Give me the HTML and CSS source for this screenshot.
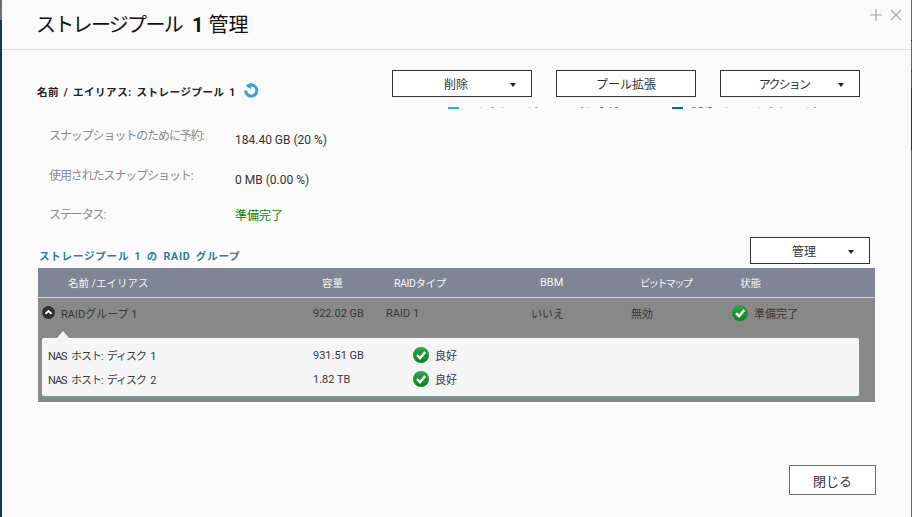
FILE: index.html
```html
<!DOCTYPE html>
<html lang="ja">
<head>
<meta charset="utf-8">
<title>ストレージプール 1 管理</title>
<link rel="stylesheet" href="styles.css">
</head>
<body>
<div class="dialog">
  <header class="head">
    <h1 class="title"><span class="kana">ストレージプール</span> <b class="num">1</b> 管理</h1>
    <div class="winbtns">
      <svg class="winicon" viewBox="0 0 12 12"><path d="M6 0V12M0 6H12"/></svg>
      <svg class="winicon" viewBox="0 0 12 12"><path d="M1 1L11 11M11 1L1 11"/></svg>
    </div>
  </header>
  <section class="top">
    <div class="alias">
      <span class="alias-text">名前 / エイリアス: ストレージプール 1</span>
      <svg class="refresh" viewBox="0 0 16 16"><path d="M4.2 4.6A5.6 5.6 0 1 1 2.6 8.6" /><polygon points="8.2,0.4 8.2,7 3,3.8"/></svg>
    </div>
    <div class="actions">
      <button class="btn has-caret"><span>削除</span><i class="caret"></i></button>
      <button class="btn"><span>プール拡張</span></button>
      <button class="btn has-caret"><span class="narrow">アクション</span><i class="caret"></i></button>
    </div>
  </section>
  <div class="clip-legend">
    <span class="swatch light"></span><span class="lg">スナップショットのために予約: 184.40 GB</span>
    <span class="swatch dark"></span><span class="lg">使用されたスナップショット: 0 MB</span>
  </div>
  <dl class="info">
    <dt>スナップショットのために予約:</dt><dd>184.40 GB (20 %)</dd>
    <dt>使用されたスナップショット:</dt><dd>0 MB (0.00 %)</dd>
    <dt>ステータス:</dt><dd class="ok">準備完了</dd>
  </dl>
  <div class="group-head">
    <h2 class="group-title">ストレージプール 1 の RAID グループ</h2>
    <button class="btn has-caret manage"><span>管理</span><i class="caret"></i></button>
  </div>
  <div class="table">
    <div class="row thead">
      <span class="c-name">名前 /エイリアス</span>
      <span class="c-cap">容量</span>
      <span class="c-type">RAIDタイプ</span>
      <span class="c-bbm">BBM</span>
      <span class="c-map">ビットマップ</span>
      <span class="c-state">状態</span>
    </div>
    <div class="row group">
      <span class="c-name with-toggle">
        <svg class="toggle" viewBox="0 0 12 12"><circle cx="6" cy="6" r="6"/><path d="M3.2 7.2L6 4.6L8.8 7.2"/></svg>
        RAIDグループ 1
      </span>
      <span class="c-cap">922.02 GB</span>
      <span class="c-type">RAID 1</span>
      <span class="c-bbm">いいえ</span>
      <span class="c-map">無効</span>
      <span class="c-state status"><svg class="check" viewBox="0 0 16 16"><defs><linearGradient id="chk" x1="0" y1="0" x2="0" y2="1"><stop offset="0" stop-color="#2fa845"/><stop offset="1" stop-color="#0d7f26"/></linearGradient></defs><circle cx="8" cy="8" r="8" fill="url(#chk)"/><path d="M4 8.2L7 11.2L12.2 5"/></svg>準備完了</span>
    </div>
    <div class="disks">
      <div class="row disk">
        <span class="c-name">NAS ホスト: ディスク 1</span>
        <span class="c-cap">931.51 GB</span>
        <span class="status"><svg class="check" viewBox="0 0 16 16"><circle cx="8" cy="8" r="8" fill="url(#chk)"/><path d="M4 8.2L7 11.2L12.2 5"/></svg>良好</span>
      </div>
      <div class="row disk">
        <span class="c-name">NAS ホスト: ディスク 2</span>
        <span class="c-cap">1.82 TB</span>
        <span class="status"><svg class="check" viewBox="0 0 16 16"><circle cx="8" cy="8" r="8" fill="url(#chk)"/><path d="M4 8.2L7 11.2L12.2 5"/></svg>良好</span>
      </div>
    </div>
  </div>
  <footer class="foot"><button class="btn close">閉じる</button></footer>
</div>
</body>
</html>
```
FILE: styles.css
```css
* { box-sizing: border-box; }
html, body { margin: 0; height: 100%; overflow: hidden; }
body {
  background:
    linear-gradient(#666, #777) left top / 2px 20px no-repeat,
    linear-gradient(#666 0 40px, #222 40px 41px, #666 41px 70px, #222 70px 71px, #555 71px 88px, #1d3a42 88px 150px, #666 150px) right top / 1px 100% no-repeat,
    #0f3558;
  font-family: Roboto, "Noto Sans CJK JP", "Liberation Sans", sans-serif;
  font-size: 11px;
  color: #333;
  padding-left: 2px;
  padding-right: 1px;
}
.dialog { height: 517px; background: #fafafa; overflow: hidden; }
.head {
  height: 50px;
  border-bottom: 1px solid #e0e0e0;
  display: flex;
  justify-content: space-between;
  padding-left: 34px;
}
.title { margin: 8px 0 0; font-size: 20px; font-weight: 400; line-height: 34px; color: #111; white-space: nowrap; }
.kana { letter-spacing: -1.7px; }
.num { font-weight: 700; margin: 0 0 0 5px; }
.winbtns { display: flex; gap: 8px; padding: 9px 9px 0 0; height: 22px; box-sizing: content-box; }
.winicon { width: 12px; height: 12px; }
.winicon path { stroke: #a8a8a8; stroke-width: 1.2; fill: none; }
.top { display: flex; justify-content: space-between; padding: 20px 51px 0 35px; height: 47px; }
.alias { display: flex; align-items: center; gap: 7px; padding-top: 14px; height: 28px; }
.alias-text { font-size: 10.5px; font-weight: 700; color: #222; letter-spacing: .56px; word-spacing: 1.5px; white-space: nowrap; }
.refresh { width: 16px; height: 16px; margin-top: -2px; }
.refresh path { fill: none; stroke: #3a9fdc; stroke-width: 3; }
.refresh polygon { fill: #3a9fdc; }
.actions { display: flex; gap: 24px; }
.btn {
  width: 140px;
  height: 27px;
  border: 1px solid #333;
  background: #fff;
  font: inherit;
  font-size: 12px;
  color: #333;
  padding: 0;
  position: relative;
}
.has-caret { padding-right: 12px; }
.narrow { letter-spacing: -1.8px; }
.caret {
  position: absolute;
  right: 15px;
  top: 12px;
  border: 3px solid transparent;
  border-top: 4px solid #222;
  border-bottom: 0;
}
.clip-legend { height: 3px; margin-top: 10px; overflow: hidden; padding-left: 446px; display: flex; line-height: 12px; font-size: 12px; color: #555; }
.swatch { width: 11px; height: 2px; margin-top: 0; flex: none; }
.swatch.light { background: #27aaf0; }
.swatch.dark { background: #0b62b5; }
.lg { margin: -10px 0 0 7px; white-space: nowrap; width: 206px; height: 13px; letter-spacing: -1.1px; }
.info {
  margin: 16px 0 0 47px;
  display: grid;
  grid-template-columns: 186px 1fr;
  grid-template-rows: 39.5px 39.5px 22px;
  font-size: 12px;
}
.info dt { color: #8a8a8a; line-height: 20px; letter-spacing: -1.1px; }
.info dd { margin: 0; color: #333; line-height: 20px; padding-top: 4px; }
.info dd.ok { color: #0a7d0a; padding-top: 1px; }
.group-head { display: flex; justify-content: space-between; align-items: flex-end; padding: 0 41px 0 37px; margin-top: 10px; height: 27px; }
.group-title { margin: 0; font-size: 10.5px; line-height: 14px; font-weight: 700; color: #2b7c9e; letter-spacing: .8px; word-spacing: 2px; white-space: nowrap; }
.btn.manage { width: 120px; }
.table { margin: 4px 36px 0 36px; height: 134px; background: #888; position: relative; }
.row { display: flex; align-items: center; position: relative; }
.row > span { position: absolute; white-space: nowrap; }
.thead { height: 30px; background: #808595; border-bottom: 1px solid #cfd0d5; color: #f4f4f4; font-size: 10.5px; }
.thead .c-name { left: 30px; }
.thead .c-cap { left: 284px; }
.thead .c-type { left: 356px; letter-spacing: -.4px; }
.thead .c-bbm { left: 502px; font-size: 11px; }
.thead .c-map { left: 602px; letter-spacing: -2px; }
.thead .c-state { left: 702px; }
.group { height: 30px; color: #383838; font-size: 11px; }
.group .c-cap { left: 275px; }
.group .c-type { left: 348px; }
.group .c-bbm { left: 493px; }
.group .c-map { left: 593px; }
.group .c-state { left: 694px; }
.with-toggle { left: 4px; display: flex; align-items: center; gap: 6px; }
.toggle { width: 13px; height: 13px; margin-top: -2px; }
.toggle circle { fill: #2f2f2f; }
.toggle path { stroke: #fff; stroke-width: 1.8; fill: none; }
.status { display: flex; align-items: center; gap: 6px; }
.check { width: 16px; height: 16px; flex: none; }
.check path { stroke: #fff; stroke-width: 2.4; fill: none; }
.disks {
  position: absolute;
  left: 3px;
  right: 15px;
  top: 69px;
  height: 60px;
  background: #f5f5f5;
  border: 1px solid #6f9c94;
  border-radius: 3px;
  padding-top: 5px;
}
.disks::before {
  content: "";
  position: absolute;
  left: 15px;
  top: -7px;
  border: 6px solid transparent;
  border-top: 0;
  border-bottom: 7px solid #f5f5f5;
}
.disk { height: 24px; font-size: 11px; color: #383838; }
.disk .c-name { left: 6px; letter-spacing: -1px; word-spacing: 2.5px; }
.disk .c-cap { left: 271px; }
.disk .status { left: 371px; }
.foot { display: flex; justify-content: flex-end; padding: 63px 35px 0 0; }
.btn.close { width: 87px; height: 30px; border: 1px solid #6e6e6e; font-size: 13px; }
```
